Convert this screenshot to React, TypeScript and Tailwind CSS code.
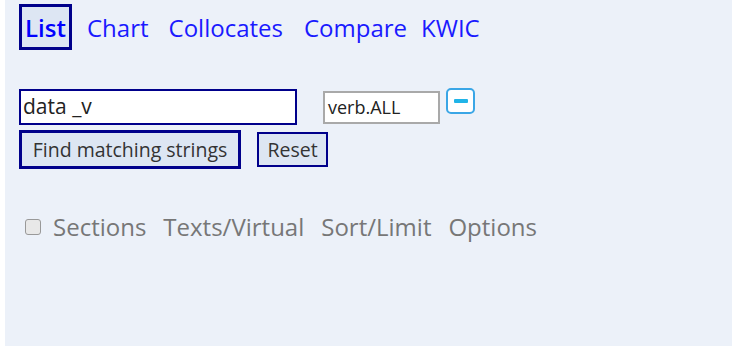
import React from "react";

export default function App() {
  const font = { fontFamily: '"Open Sans", "Noto Sans", sans-serif' };
  return (
    <div className="w-[734px] h-[347px] bg-white" style={font}>
      <div className="ml-[5px] w-[727px] h-[346px] bg-[#ecf1f9] pt-[4px] pl-[14px]">
        <div className="flex items-center h-[46px] text-[24px] leading-[32px]">
          <div className="h-[46px] w-[53px] border-[3px] border-[#00008b] bg-[#dde6f3] flex items-center justify-center pt-[2px] text-[#0000ff] font-semibold">
            List
          </div>
          <span className="ml-[15px] pt-[2px] text-[#1a1aff]">Chart</span>
          <span className="ml-[20px] pt-[2px] text-[#1a1aff]">Collocates</span>
          <span className="ml-[21px] pt-[2px] text-[#1a1aff]">Compare</span>
          <span className="ml-[14px] pt-[2px] text-[#1a1aff]">KWIC</span>
        </div>
        <div className="flex items-start mt-[39px]">
          <div className="w-[278px] h-[36px] border-2 border-[#00008b] bg-white flex items-center pl-[2px] text-[21px] text-[#222]">
            data _v
          </div>
          <div className="ml-[26px] mt-[2px] w-[117px] h-[33px] border-2 border-[#a9a9a9] bg-white flex items-center pl-[3px] text-[18px] text-[#222]">
            verb.ALL
          </div>
          <div className="ml-[6px] mt-[-1px] w-[29px] h-[26px] rounded-[5px] border-2 border-[#3aa6e6] bg-white flex items-center justify-center">
            <div className="w-[14px] h-[4px] bg-[#20b4e8] rounded-[1px]" />
          </div>
        </div>
        <div className="flex items-start mt-[5px]">
          <div className="w-[222px] h-[39px] border-[3px] border-[#00008b] bg-[#dde6f3] flex items-center justify-center text-[19.5px] text-[#333]">
            Find matching strings
          </div>
          <div className="ml-[16px] mt-[2px] w-[71px] h-[35px] border-2 border-[#00008b] bg-[#dde6f3] flex items-center justify-center text-[19.5px] text-[#333]">
            Reset
          </div>
        </div>
        <div className="flex items-center mt-[42px] text-[24px] leading-[32px] text-[#777]">
          <div className="ml-[6px] w-[16px] h-[16px] rounded-[3px] border border-[#999] bg-[#e8e8e8]" />
          <span className="ml-[12px]">Sections</span>
          <span className="ml-[17px]">Texts/Virtual</span>
          <span className="ml-[17px]">Sort/Limit</span>
          <span className="ml-[17px]">Options</span>
        </div>
      </div>
    </div>
  );
}
